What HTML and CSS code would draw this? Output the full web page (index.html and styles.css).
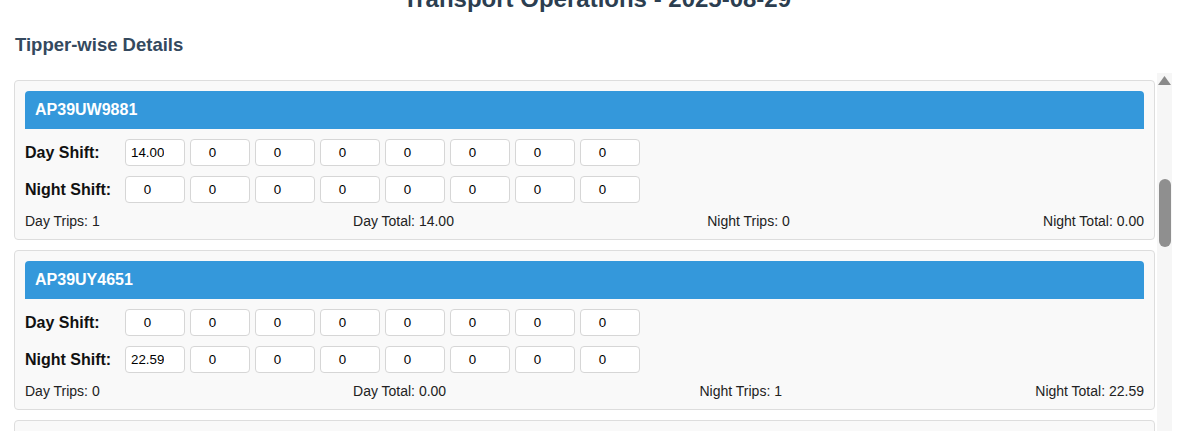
FILE: index.html
```html
<!DOCTYPE html>
<html>
<head>
<meta charset="utf-8">
<link rel="stylesheet" href="styles.css">
</head>
<body>
<div class="page">
  <h2 class="title">Transport Operations - 2025-08-29</h2>
  <h3 class="section">Tipper-wise Details</h3>
  <div class="scroller">
    <div class="list">
      <div class="card">
        <div class="card-head">AP39UW9881</div>
        <div class="shift-row">
          <span class="shift-label">Day Shift:</span>
          <div class="inputs">
            <input type="number" value="14.00"><input type="number" value="0"><input type="number" value="0"><input type="number" value="0"><input type="number" value="0"><input type="number" value="0"><input type="number" value="0"><input type="number" value="0">
          </div>
        </div>
        <div class="shift-row">
          <span class="shift-label">Night Shift:</span>
          <div class="inputs">
            <input type="number" value="0"><input type="number" value="0"><input type="number" value="0"><input type="number" value="0"><input type="number" value="0"><input type="number" value="0"><input type="number" value="0"><input type="number" value="0">
          </div>
        </div>
        <div class="summary">
          <span>Day Trips: 1</span>
          <span>Day Total: 14.00</span>
          <span>Night Trips: 0</span>
          <span>Night Total: 0.00</span>
        </div>
      </div>
      <div class="card">
        <div class="card-head">AP39UY4651</div>
        <div class="shift-row">
          <span class="shift-label">Day Shift:</span>
          <div class="inputs">
            <input type="number" value="0"><input type="number" value="0"><input type="number" value="0"><input type="number" value="0"><input type="number" value="0"><input type="number" value="0"><input type="number" value="0"><input type="number" value="0">
          </div>
        </div>
        <div class="shift-row">
          <span class="shift-label">Night Shift:</span>
          <div class="inputs">
            <input type="number" value="22.59"><input type="number" value="0"><input type="number" value="0"><input type="number" value="0"><input type="number" value="0"><input type="number" value="0"><input type="number" value="0"><input type="number" value="0">
          </div>
        </div>
        <div class="summary">
          <span>Day Trips: 0</span>
          <span>Day Total: 0.00</span>
          <span>Night Trips: 1</span>
          <span>Night Total: 22.59</span>
        </div>
      </div>
      <div class="card">
        <div class="card-head">AP39UX2210</div>
      </div>
    </div>
    <div class="scrollbar">
      <svg class="arrow" width="15" height="15" viewBox="0 0 15 15"><polygon points="1,12 7.5,3 14,12" fill="#8a8a8a"/></svg>
      <div class="track-gap"></div>
      <div class="thumb"></div>
    </div>
  </div>
</div>
</body>
</html>
```
FILE: styles.css
```css
html, body {
  margin: 0;
  padding: 0;
  height: 431px;
  overflow: hidden;
  background: #fff;
  font-family: "Liberation Sans", Arial, sans-serif;
}
.page {
  padding: 0 10px 0 14px;
}
.title {
  margin: -15px 0 0;
  font-size: 24px;
  line-height: 28px;
  font-weight: bold;
  text-align: center;
  color: #2c3e50;
  padding-left: 8px;
}
.section {
  margin: 21px 0 0 1px;
  font-size: 18.5px;
  line-height: 21px;
  font-weight: bold;
  color: #34495e;
}
.scroller {
  margin-top: 18px;
  display: flex;
  gap: 2px;
  height: 400px;
  overflow: hidden;
}
.list {
  flex: 1;
  padding-top: 7px;
  display: flex;
  flex-direction: column;
  gap: 10px;
}
.card {
  border: 1px solid #ddd;
  border-radius: 4px;
  background: #f9f9f9;
  padding: 10px;
}
.card-head {
  background: #3498db;
  color: #fff;
  font-size: 16px;
  font-weight: bold;
  line-height: 18px;
  padding: 10px;
  border-radius: 4px 4px 0 0;
  margin-bottom: 10px;
}
.shift-row {
  display: flex;
  align-items: center;
  margin-bottom: 10px;
}
.shift-label {
  width: 100px;
  flex: none;
  font-size: 16px;
  font-weight: bold;
  color: #111;
}
.inputs {
  display: flex;
  gap: 5px;
}
.inputs input {
  width: 60px;
  height: 27px;
  box-sizing: border-box;
  border: 1px solid #d6d6d6;
  border-radius: 4px;
  background: #fff;
  padding: 5px;
  font-family: "Liberation Sans", Arial, sans-serif;
  font-size: 13.33px;
  color: #000;
  text-align: center;
  margin: 0;
}
.summary {
  display: flex;
  justify-content: space-between;
  font-size: 14px;
  line-height: 16px;
  color: #222;
}
.scrollbar {
  width: 15px;
  flex: none;
  background: #f6f6f6;
  display: flex;
  flex-direction: column;
  align-items: center;
}
.arrow {
  display: block;
}
.track-gap {
  height: 91px;
}
.thumb {
  width: 12px;
  height: 68px;
  border-radius: 6px;
  background: #8f8f8f;
}
```
